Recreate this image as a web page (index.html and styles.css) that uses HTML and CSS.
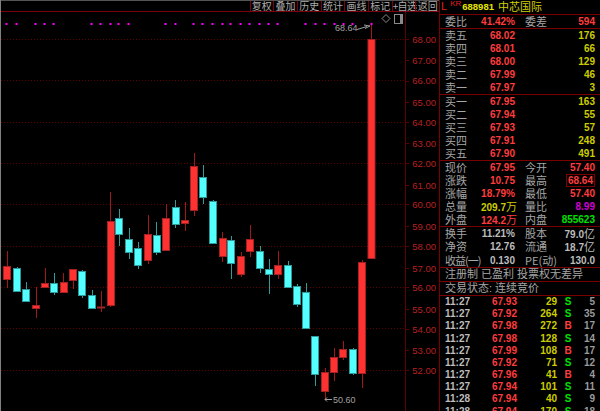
FILE: index.html
```html
<!DOCTYPE html>
<html lang="zh-CN">
<head>
    <meta charset="UTF-8">
    <title>688981 中芯国际</title>
    <link rel="stylesheet" href="styles.css">
</head>
<body>
    <div class="chart">
        <div class="toolbar">
            <span class="tool">复权</span>
            <span class="tool">叠加</span>
            <span class="tool">历史</span>
            <span class="tool">统计</span>
            <span class="tool">画线</span>
            <span class="tool">标记</span>
            <span class="tool">+自选</span>
            <span class="tool">返回</span>
        </div>
        <svg class="canvas" viewBox="1 12 438 399" width="438" height="399">
            <!-- grid -->
            <path class="grid" d="M1 39.5H405M1 80.5H405M1 122.5H405M1 163.5H405M1 204.5H405M1 246.5H405M1 287.5H405M1 328.5H405M1 370.5H405"/>
            <path class="axis" d="M405.500 12V411M405 39.500H409M405 60.500H409M405 81.500H409M405 102.500H409M405 122.500H409M405 143.500H409M405 163.500H409M405 185.500H409M405 204.500H409M405 226.500H409M405 246.500H409M405 268.500H409M405 287.500H409M405 309.500H409M405 329.500H409M405 350.500H409M405 370.500H409"/>

            <!-- magenta markers -->
            <g class="dots">
                <rect x="5.500" y="23" width="2" height="2"/><rect x="15.500" y="23" width="2" height="2"/>
                <rect x="34.500" y="23" width="2" height="2"/><rect x="43.500" y="23" width="2" height="2"/>
                <rect x="52.500" y="23" width="2" height="2"/><rect x="90.500" y="23" width="2" height="2"/>
                <rect x="99.500" y="23" width="2" height="2"/><rect x="109.500" y="23" width="2" height="2"/>
                <rect x="117.500" y="23" width="2" height="2"/><rect x="127.500" y="23" width="2" height="2"/>
                <rect x="164.500" y="23" width="2" height="2"/><rect x="174.500" y="23" width="2" height="2"/>
                <rect x="192.500" y="23" width="2" height="2"/><rect x="201.500" y="23" width="2" height="2"/>
                <rect x="211.500" y="23" width="2" height="2"/><rect x="221.500" y="23" width="2" height="2"/>
                <rect x="229.500" y="23" width="2" height="2"/><rect x="239.500" y="23" width="2" height="2"/>
                <rect x="248.500" y="23" width="2" height="2"/><rect x="258.500" y="23" width="2" height="2"/>
                <rect x="267.500" y="23" width="2" height="2"/><rect x="276.500" y="23" width="2" height="2"/>
                <rect x="304.500" y="23" width="2" height="2"/><rect x="314.500" y="23" width="2" height="2"/>
                <rect x="323.500" y="23" width="2" height="2"/><rect x="333.500" y="23" width="2" height="2"/>
                <rect x="342.500" y="23" width="2" height="2"/><rect x="351.500" y="23" width="2" height="2"/>
                <rect x="370.500" y="23" width="2" height="2"/>
            </g>

            <!-- wicks -->
            <path class="wick-up" d="M7.500 251V288M36.500 287V318M45.500 268V283M63.500 273V282M73.500 280V289M101.500 291V312M110.500 192V307M148.500 215V264M166.500 204V218M185.500 202V231M194.500 153V216M222.500 232V262M241.500 252V277M250.500 225V257M278.500 251V279M325.500 368V400M334.500 348V381M343.500 341V360M362.500 260V388M371.500 25V39"/>
            <path class="wick-down" d="M17.500 267V268M26.500 282V302M54.500 273V295M82.500 270V298M92.500 290V295M119.500 209V246M129.500 228V259M138.500 242V269M156.500 222V255M175.500 200V228M203.500 165V204M213.500 200V244M231.500 236V279M260.500 246V273M269.500 259V294M288.500 261V288M297.500 284V307M306.500 283V292M315.500 374V386M353.500 348V375"/>

            <!-- candle bodies -->
            <g class="up">
                <rect x="3.500" y="266.500" width="7" height="13"/>
                <rect x="32.500" y="305.500" width="7" height="3"/>
                <rect x="41.500" y="283.500" width="7" height="4"/>
                <rect x="60.500" y="282.500" width="7" height="10"/>
                <rect x="69.500" y="269.500" width="7" height="11"/>
                <rect x="97.500" y="307" width="7" height="1"/>
                <rect x="107.500" y="221.500" width="7" height="84"/>
                <rect x="144.500" y="234.500" width="7" height="26"/>
                <rect x="162.500" y="218.500" width="7" height="32"/>
                <rect x="181.500" y="220.500" width="7" height="3"/>
                <rect x="190.500" y="166.500" width="7" height="44"/>
                <rect x="219.500" y="238.500" width="7" height="18"/>
                <rect x="237.500" y="256.500" width="7" height="18"/>
                <rect x="246.500" y="239.500" width="7" height="12"/>
                <rect x="274.500" y="265.500" width="7" height="9"/>
                <rect x="321.500" y="372.500" width="7" height="19"/>
                <rect x="330.500" y="357.500" width="7" height="15"/>
                <rect x="339.500" y="349.500" width="7" height="8"/>
                <rect x="358.500" y="262.500" width="7" height="111"/>
                <rect x="368" y="39.500" width="7" height="219"/>
            </g>
            <g class="down">
                <rect x="13.500" y="268.500" width="7" height="23"/>
                <rect x="22.500" y="289.500" width="7" height="12"/>
                <rect x="50.500" y="283.500" width="7" height="9"/>
                <rect x="78.500" y="271.500" width="7" height="24"/>
                <rect x="88.500" y="295.500" width="7" height="13"/>
                <rect x="115.500" y="218.500" width="7" height="16"/>
                <rect x="125.500" y="239.500" width="7" height="13"/>
                <rect x="134.500" y="248.500" width="7" height="17"/>
                <rect x="153.500" y="235.500" width="7" height="17"/>
                <rect x="172.500" y="207.500" width="7" height="17"/>
                <rect x="199.500" y="177.500" width="7" height="20"/>
                <rect x="209.500" y="201.500" width="7" height="42"/>
                <rect x="227.500" y="240.500" width="7" height="23"/>
                <rect x="256.500" y="251.500" width="7" height="17"/>
                <rect x="265.500" y="269.500" width="7" height="5"/>
                <rect x="284.500" y="265.500" width="7" height="22"/>
                <rect x="293.500" y="286.500" width="7" height="18"/>
                <rect x="302.500" y="292.500" width="7" height="36"/>
                <rect x="311.500" y="336.500" width="7" height="38"/>
                <rect x="349.500" y="349.500" width="7" height="24"/>
            </g>

            <!-- high / low callouts -->
            <text class="note" x="335" y="31">68.64</text>
            <path class="note-line" d="M357 29.500L367 26.500M364 25L370 26L365 28.500"/>
            <text class="note" x="333" y="403">50.60</text>
            <path class="note-line" d="M325 399.500H332M327 397.500L325 399.500L327 401.500"/>

            <!-- corner icons -->
            <path class="corner" d="M386 14.500L390 18.500L386 22.500L382 18.500Z"/>
            <rect class="corner" x="394.500" y="14.500" width="8" height="9"/>
            <rect class="corner-fill" x="400" y="14" width="3" height="10"/>

            <!-- price scale -->
            <g class="scale">
                <text x="436" y="42.500">68.00</text>
                <text x="436" y="64">67.00</text>
                <text x="436" y="84">66.00</text>
                <text x="436" y="105.500">65.00</text>
                <text x="436" y="125.500">64.00</text>
                <text x="436" y="147">63.00</text>
                <text x="436" y="167">62.00</text>
                <text x="436" y="188.500">61.00</text>
                <text x="436" y="208">60.00</text>
                <text x="436" y="229.500">59.00</text>
                <text x="436" y="249.500">58.00</text>
                <text x="436" y="271.500">57.00</text>
                <text x="436" y="291">56.00</text>
                <text x="436" y="312.500">55.00</text>
                <text x="436" y="332.500">54.00</text>
                <text x="436" y="353.500">53.00</text>
                <text x="436" y="373.500">52.00</text>
            </g>
        </svg>
    </div>

    <div class="panel">
        <div class="title">
            <span class="title-l">L</span><span class="title-kr">KR</span><span class="title-code">688981</span><span class="title-name">中芯国际</span>
        </div>

        <div class="sec quad row-13">
            <span>委比</span><b class="red">41.42%</b><span>委差</span><b class="red">594</b>
        </div>

        <div class="sec">
            <div class="book"><span>卖五</span><b class="red">68.02</b><b class="yel">176</b></div>
            <div class="book"><span>卖四</span><b class="red">68.01</b><b class="yel">66</b></div>
            <div class="book"><span>卖三</span><b class="red">68.00</b><b class="yel">129</b></div>
            <div class="book"><span>卖二</span><b class="red">67.99</b><b class="yel">46</b></div>
            <div class="book"><span>卖一</span><b class="red">67.97</b><b class="yel">3</b></div>
        </div>

        <div class="sec">
            <div class="book"><span>买一</span><b class="red">67.95</b><b class="yel">163</b></div>
            <div class="book"><span>买二</span><b class="red">67.94</b><b class="yel">55</b></div>
            <div class="book"><span>买三</span><b class="red">67.93</b><b class="yel">57</b></div>
            <div class="book"><span>买四</span><b class="red">67.91</b><b class="yel">248</b></div>
            <div class="book"><span>买五</span><b class="red">67.90</b><b class="yel">491</b></div>
        </div>

        <div class="sec quad row-13">
            <span>现价</span><b class="red">67.95</b><span>今开</span><b class="red">57.40</b>
            <span>涨跌</span><b class="red">10.75</b><span>最高</span><b class="red"><i class="boxed">68.64</i></b>
            <span>涨幅</span><b class="red">18.79%</b><span>最低</span><b class="red">57.40</b>
            <span>总量</span><b class="yel">209.7<em>万</em></b><span>量比</span><b class="mag">8.99</b>
            <span>外盘</span><b class="red">124.2<em>万</em></b><span>内盘</span><b class="grn">855623</b>
        </div>

        <div class="sec quad row-fund">
            <span>换手</span><b class="wht">11.21%</b><span>股本</span><b class="wht">79.0<em>亿</em></b>
            <span>净资</span><b class="wht">12.76</b><span>流通</span><b class="wht">18.7<em>亿</em></b>
            <span class="tight">收益(一)</span><b class="wht">0.130</b><span>PE(动)</span><b class="wht">130.0</b>
        </div>

        <div class="sec line">注册制 已盈利 投票权无差异</div>
        <div class="sec line">交易状态: 连续竞价</div>

        <div class="ticks">
            <div class="tick"><span>11:27</span><b class="red">67.93</b><b class="yel">29</b><b class="grn">S</b><span>5</span></div>
            <div class="tick"><span>11:27</span><b class="red">67.92</b><b class="yel">264</b><b class="grn">S</b><span>35</span></div>
            <div class="tick"><span>11:27</span><b class="red">67.98</b><b class="yel">272</b><b class="red">B</b><span>17</span></div>
            <div class="tick"><span>11:27</span><b class="red">67.98</b><b class="yel">128</b><b class="grn">S</b><span>14</span></div>
            <div class="tick"><span>11:27</span><b class="red">67.99</b><b class="yel">108</b><b class="red">B</b><span>17</span></div>
            <div class="tick"><span>11:27</span><b class="red">67.92</b><b class="yel">71</b><b class="grn">S</b><span>12</span></div>
            <div class="tick"><span>11:27</span><b class="red">67.96</b><b class="yel">41</b><b class="red">B</b><span>4</span></div>
            <div class="tick"><span>11:27</span><b class="red">67.94</b><b class="yel">101</b><b class="grn">S</b><span>11</span></div>
            <div class="tick"><span>11:28</span><b class="red">67.94</b><b class="yel">40</b><b class="grn">S</b><span>9</span></div>
            <div class="tick"><span>11:28</span><b class="red">67.94</b><b class="yel">170</b><b class="grn">S</b><span>18</span></div>
        </div>
    </div>
</body>
</html>
```

FILE: styles.css
```css
* { box-sizing: border-box; }
html, body { margin: 0; padding: 0; }
body {
    width: 600px;
    height: 411px;
    background: #000;
    overflow: hidden;
    display: flex;
    border-left: 1px solid #808080;
    font-family: "Liberation Sans", "Noto Sans CJK SC", sans-serif;
    color: #a6a6a6;
}

/* left: chart */
.chart { width: 438px; height: 411px; flex: none; }
.toolbar {
    height: 12px;
    display: flex;
    justify-content: flex-end;
    border-bottom: 1px solid #7a0010;
    border-top: 1px solid #555;
}
.tool {
    flex: none;
    width: 23.7px;
    height: 10px;
    line-height: 10px;
    border-left: 1px solid #7a0010;
    font-size: 10px;
    text-align: center;
    white-space: nowrap;
    color: #adadad;
    font-family: "Noto Sans CJK SC", sans-serif;
}
.tool:nth-child(7) { letter-spacing: -0.6px; }
.canvas { display: block; }

.grid { stroke: #5a0000; stroke-dasharray: 1 2; fill: none; }
.axis { stroke: #5c0000; fill: none; }
.dots rect { fill: #ff00ff; }
.wick-up { stroke: #a01818; fill: none; }
.wick-down { stroke: #2f9c9c; fill: none; }
.up rect { fill: #ff3232; stroke: #a52020; stroke-width: 1; }
.down rect { fill: #54ffff; stroke: #2c9a9a; stroke-width: 1; }
.note { fill: #a0a0a0; font-size: 9px; }
.note-line { stroke: #a0a0a0; fill: none; }
.corner { stroke: #8a8a8a; fill: none; }
.corner-fill { fill: #8a8a8a; }
.scale text { fill: #b82020; font-size: 9.500px; text-anchor: end; }

/* right: quote panel */
.panel {
    width: 161px;
    height: 411px;
    flex: none;
    border-left: 1px solid #7a0000;
    overflow: hidden;
    font-size: 11px;
}
.panel b { font-weight: bold; font-size: 10px; white-space: nowrap; }
.panel span { font-family: "Noto Sans CJK SC", sans-serif; }
.red { color: #ff3c3c; }
.yel { color: #cccc00; }
.grn { color: #00e000; }
.mag { color: #d000d0; }
.wht { color: #bdbdbd; }

.title {
    height: 15px;
    border-bottom: 1px solid #7a0000;
    display: flex;
    align-items: flex-start;
    padding-left: 1px;
    line-height: 13px;
}
.panel .title-l { color: #e02020; font-family: "Liberation Sans", sans-serif; font-size: 11px; }
.panel .title-kr { color: #e02020; font-family: "Liberation Sans", sans-serif; font-size: 8px; line-height: 8px; margin-left: 3px; }
.panel .title-code { color: #e6e600; font-family: "Liberation Sans", sans-serif; font-size: 9.500px; font-weight: bold; margin-left: 1px; }
.panel .title-name { color: #d0d000; font-size: 11px; margin-left: 4px; }

.sec { border-bottom: 1px solid #7a0000; padding: 0 5px 0 5px; }
.book {
    height: 13px;
    line-height: 13px;
    display: grid;
    grid-template-columns: 22px 48px 1fr;
    text-align: right;
}
.book span { text-align: left; }

.quad {
    display: grid;
    grid-template-columns: 36px 34px 10px 1fr;
    text-align: right;
}
.quad > span { text-align: left; white-space: nowrap; }
.quad > span:nth-child(4n+3) { grid-column: 3 / 4; margin-left: 10px; }
.quad > b:nth-child(4n) { grid-column: 4 / 5; }
.row-13 { grid-auto-rows: 13px; line-height: 13px; }
.row-fund { grid-auto-rows: 13.333px; line-height: 13.333px; }
.panel em { font-style: normal; font-weight: normal; font-size: 11px; font-family: "Noto Sans CJK SC", sans-serif; }
.boxed { font-style: normal; border: 1px solid #7a0000; padding: 0 1px; }
.tight { letter-spacing: -1px; }

.line { height: 14px; line-height: 13px; white-space: nowrap; overflow: hidden; }

.ticks { padding: 0 5px; }
.tick {
    height: 12.200px;
    line-height: 12.200px;
    display: grid;
    grid-template-columns: 40px 32px 40px 16px 1fr;
    text-align: right;
}
.tick span { font-family: "Liberation Sans", sans-serif; font-size: 10px; }
.tick span:first-child { text-align: left; color: #bdbdbd; font-weight: bold; }
.tick span:last-child { color: #9a9a9a; font-weight: bold; }
.tick b:nth-child(4) { text-align: center; padding-left: 6px; }
```
